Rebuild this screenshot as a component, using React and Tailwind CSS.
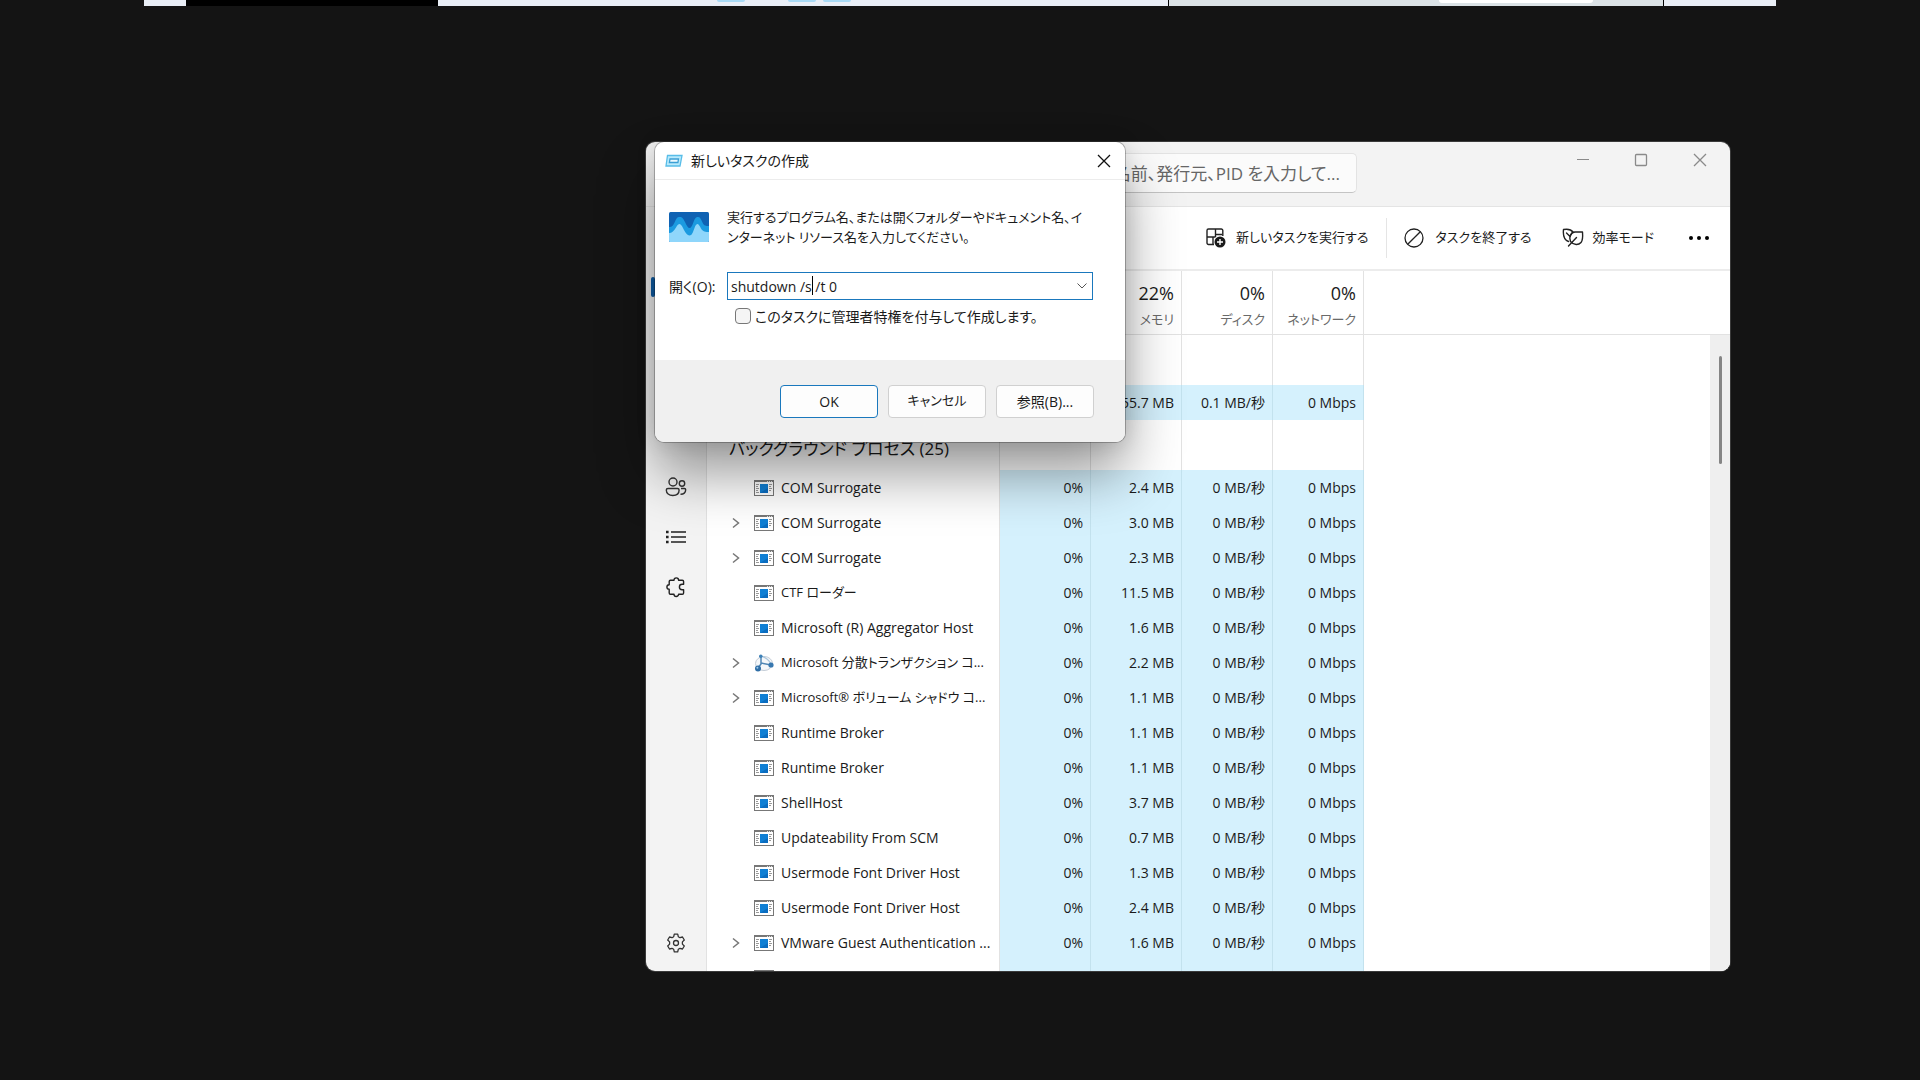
import { useState } from "react";

const processes = [
    { name: "COM Surrogate", memory: "2.4 MB" },
    { name: "COM Surrogate", memory: "3.0 MB", expandable: true },
    { name: "COM Surrogate", memory: "2.3 MB", expandable: true },
    { name: "CTF ローダー", memory: "11.5 MB", small: true },
    { name: "Microsoft (R) Aggregator Host", memory: "1.6 MB" },
    { name: "Microsoft 分散トランザクション コ...", memory: "2.2 MB", expandable: true, icon: "dtc", small: true },
    { name: "Microsoft® ボリューム シャドウ コ...", memory: "1.1 MB", expandable: true, small: true },
    { name: "Runtime Broker", memory: "1.1 MB" },
    { name: "Runtime Broker", memory: "1.1 MB" },
    { name: "ShellHost", memory: "3.7 MB" },
    { name: "Updateability From SCM", memory: "0.7 MB" },
    { name: "Usermode Font Driver Host", memory: "1.3 MB" },
    { name: "Usermode Font Driver Host", memory: "2.4 MB" },
    { name: "VMware Guest Authentication ...", memory: "1.6 MB", expandable: true },
];

function AppIcon() {
    return (
        <svg width="20" height="16" viewBox="0 0 20 16" className="shrink-0">
            <rect x="0.5" y="0.5" width="19" height="15" fill="#fff" stroke="#777" />
            <path d="M0 1h20" stroke="#777" strokeWidth="2" />
            <path d="M13 1.5h1M15 1.5h1M17 1.5h1" stroke="#ddd" />
            <path d="M2 4.5h3M2 6.5h2M2 8.5h3M2 10.5h2M2 12.5h3M15 4.5h3M15 6.5h2M15 8.5h3M15 10.5h2" stroke="#999" />
            <rect x="6" y="4" width="8" height="9" fill="#0f7fd4" />
            <path d="M6 13l8-5v5z" fill="#0a6cc0" />
        </svg>
    );
}

function DtcIcon() {
    return (
        <svg width="20" height="18" viewBox="0 0 20 18" className="shrink-0">
            <ellipse cx="10" cy="9.5" rx="8.5" ry="7" fill="#f4f7fa" stroke="#c3ccd6" />
            <path d="M7 3v7l-3 4M7 9l10 2" fill="none" stroke="#4f86b5" strokeWidth="1.5" />
            <path d="M7 2c4 1 8 4 10 8" fill="none" stroke="#a9c4da" strokeWidth="1.2" />
            <circle cx="6.8" cy="2.2" r="1.8" fill="#3f82b8" />
            <circle cx="17" cy="11" r="2.6" fill="#3878b0" />
            <circle cx="4" cy="14.5" r="3" fill="#2f6ea6" />
            <circle cx="3.4" cy="13.7" r="1" fill="#9cc8e8" />
        </svg>
    );
}

function UsersIcon() {
    return (
        <svg width="22" height="20" viewBox="0 0 22 20" fill="none" stroke="#333" strokeWidth="1.4">
            <circle cx="8" cy="5" r="4" />
            <circle cx="17" cy="6.5" r="2.7" />
            <path d="M3 11.5h9.5c1 0 1.6.6 1.6 1.5 0 3.500-2.500 5.500-6.300 5.500S1.300 16.500 1.300 13c0-.9.7-1.500 1.700-1.500z" />
            <path d="M16 11.5h3.400c.8 0 1.300.5 1.300 1.300 0 2.900-2 4.500-5.200 4.400" />
        </svg>
    );
}

function ListIcon() {
    return (
        <svg width="22" height="14" viewBox="0 0 22 14">
            <path d="M6 2h15M6 7h15M6 12h15" stroke="#222" strokeWidth="1.5" />
            <path d="M1 2h2.600M1 7h2.600M1 12h2.600" stroke="#222" strokeWidth="2.4" />
        </svg>
    );
}

function PuzzleIcon() {
    return (
        <svg width="22" height="22" viewBox="0 0 22 22" fill="none" stroke="#222" strokeWidth="1.4" strokeLinejoin="round">
            <path d="M5.500 4.200H9a2.300 2.300 0 0 1 4.600 0h3.700c.8 0 1.300.5 1.300 1.200v2.900h-1.500a2.700 2.700 0 0 0 0 5.400h1.500v3.200c0 .8-.5 1.300-1.300 1.300h-3.700a2.300 2.300 0 0 1-4.600 0H5.500c-.8 0-1.300-.5-1.300-1.300v-3.600a2.300 2.300 0 0 1 0-4.600V5.400c0-.7.500-1.200 1.300-1.200z" />
        </svg>
    );
}

function GearIcon() {
    return (
        <svg width="20" height="20" viewBox="0 0 20 20" fill="none" stroke="#333" strokeWidth="1.3" strokeLinejoin="round">
            <circle cx="10" cy="10" r="2.5" />
            <path d="M8.300 1.200h3.400l.6 2.500 1.700 1 2.500-.7 1.800 3-1.900 1.900v2.200l1.900 1.900-1.800 3-2.500-.7-1.700 1-.6 2.500H8.300l-.6-2.500-1.700-1-2.500.7-1.800-3 1.900-1.900V8.900L1.700 7l1.800-3 2.500.7 1.700-1z" />
        </svg>
    );
}

function NewTaskIcon() {
    return (
        <svg width="20" height="20" viewBox="0 0 20 20" fill="none" stroke="#222" strokeWidth="1.4">
            <path d="M8 16.500H2.500a1.500 1.500 0 0 1-1.500-1.500V2.500A1.500 1.500 0 0 1 2.500 1h12.800a1.500 1.500 0 0 1 1.500 1.500V8M1 9h8.500M9.500 1v8M9.500 6.500H16M7 9v7.500" />
            <circle cx="14" cy="14" r="5.5" fill="#1a1a1a" stroke="none" />
            <path d="M14 11v6M11 14h6" stroke="#fff" />
        </svg>
    );
}

function LeafIcon() {
    return (
        <svg width="22" height="20" viewBox="0 0 22 20" fill="none" stroke="#222" strokeWidth="1.4" strokeLinejoin="round" strokeLinecap="round">
            <path d="M6.500 13.500C2.500 12 .8 8 1.500 1.500c4-.7 7.500-.3 9.500 2.500" />
            <path d="M8.500 13.500C6.500 9 9 4 13 4h7.500c.4 5 .3 8.500-1.500 10.500-2.500 2.800-7 3-10.500-1z" />
            <path d="M4.500 5l3.500 3.500M14.500 9.500L6.500 18M8 8.500L10 5" />
        </svg>
    );
}

function WaveIcon() {
    return (
        <svg width="40" height="30" viewBox="0 0 40 30">
            <rect width="40" height="30" rx="1.5" fill="#0f62b3" />
            <path d="M0 15c3 0 4-1 6-5.500S9 5 11 5s3 1 5 5 3 6 4.500 6 2.500-2 4-6 2.500-5 4.500-5 3 2 4.500 5.500S37 14 40 14v15H0z" fill="#1b9ae0" />
            <path d="M0 21c3 0 5-2 7-5.500C8.500 12.500 9.500 12 10.500 12s2 1 3.500 4 4 7.500 6.500 7.500 3.500-3.500 5-7.500c1-3 2-4 3-4s2 1.500 3.500 4.500S37 20 40 20v8.500q0 1.500-1.500 1.500h-37Q0 30 0 28.500z" fill="#8fd6fb" />
        </svg>
    );
}

function RunIcon() {
    return (
        <svg width="18" height="14" viewBox="0 0 18 14">
            <path d="M2.500 1.500h14.500l-2 10.500H1z" fill="#b8eafc" stroke="#58bde8" strokeWidth="1.3" />
            <path d="M5 5h8.500l-.6 3.500H4.400z" fill="#eefaff" stroke="#3b9fd4" strokeWidth="1.3" />
        </svg>
    );
}

function ExpandButton() {
    return (
        <button aria-label="展開" className="flex w-[8px] justify-center">
            <svg width="8" height="12" viewBox="0 0 8 12" fill="none" stroke="#777" strokeWidth="1.5">
                <path d="M1 1.500l5.500 4.500L1 10.500" />
            </svg>
        </button>
    );
}

function GroupRow({ title }) {
    return (
        <tr className="h-[50px]">
            <td className="border-r border-[#e2e2e2] pt-[8px] pl-[22px] text-left text-[17px]">{title}</td>
            <td className="border-r border-[#e2e2e2]"></td>
            <td className="border-r border-[#e2e2e2]"></td>
            <td className="border-r border-[#e2e2e2]"></td>
            <td className="border-r border-[#e2e2e2]"></td>
            <td></td>
        </tr>
    );
}

function ProcessRow({ process }) {
    const { name, cpu = "0%", memory, disk = "0 MB/秒", network = "0 Mbps", expandable, icon = "app", small } = process;
    return (
        <tr className="h-[35px] text-right">
            <td className="border-r border-[#e2e2e2]">
                <div className="flex items-center pl-[25px] text-left">
                    <div className="w-[22px] shrink-0">{expandable && <ExpandButton />}</div>
                    {icon === "app" && <AppIcon />}
                    {icon === "dtc" && <DtcIcon />}
                    <span className={small ? "pl-[7px] text-[13px]" : "pl-[7px]"}>{name}</span>
                </div>
            </td>
            <td className="border-r border-[#c3e2ee] bg-[#d5f1fd] pr-[7px]">{cpu}</td>
            <td className="border-r border-[#c3e2ee] bg-[#d5f1fd] pr-[7px]">{memory}</td>
            <td className="border-r border-[#c3e2ee] bg-[#d5f1fd] pr-[7px]">{disk}</td>
            <td className="border-r border-[#c3e2ee] bg-[#d5f1fd] pr-[7px]">{network}</td>
            <td></td>
        </tr>
    );
}

function ColumnHead({ value, label }) {
    return (
        <th scope="col" className="border-r border-b border-[#e2e2e2] pt-[6px] pr-[7px] text-right font-normal">
            <div className="text-[18px] leading-[26px]">{value}</div>
            <div className="text-[13px] leading-[26px] text-[#6a6a6a]">{label}</div>
        </th>
    );
}

function TaskManager() {
    return (
        <main className="absolute top-[142px] right-[190px] bottom-[109px] left-[646px] flex flex-col overflow-hidden rounded-[9px] bg-[#f3f3f3] shadow-[0_0_0_1px_#3a3a3a]">
            <header className="flex h-[65px] shrink-0 items-start justify-between border-b border-[#e4e4e4] pl-[330px]">
                <input
                    type="text"
                    aria-label="検索"
                    placeholder="名前、発行元、PID を入力して..."
                    className="mt-[11px] h-[40px] w-[381px] rounded-[5px] border border-[#e3e3e3] border-b-[#c4c4c4] bg-[#fbfbfb] pr-[16px] text-right text-[17px] placeholder:text-[#666]"
                />
                <div className="flex pt-[10px] text-[#8a8a8a]">
                    <button aria-label="最小化" className="flex h-[16px] w-[58px] items-center justify-center">
                        <svg width="14" height="14" stroke="currentColor"><path d="M1 6.500h12" /></svg>
                    </button>
                    <button aria-label="最大化" className="flex h-[16px] w-[58px] items-center justify-center">
                        <svg width="14" height="14" fill="none" stroke="currentColor" strokeWidth="1.3"><rect x="1.5" y="1.5" width="11" height="11" rx="1" /></svg>
                    </button>
                    <button aria-label="閉じる" className="flex h-[16px] w-[60px] items-center justify-center">
                        <svg width="14" height="14" stroke="currentColor" strokeWidth="1.3"><path d="M1 1l12 12M13 1L1 13" /></svg>
                    </button>
                </div>
            </header>

            <div className="flex min-h-0 flex-1">
                <nav className="flex w-[60px] shrink-0 flex-col items-center pt-[52px]">
                    <button aria-label="プロセス" className="flex h-[56px] w-full items-center pl-[5px]">
                        <span className="h-[20px] w-[4px] rounded-full bg-[#0f5fa8]"></span>
                    </button>
                    <button aria-label="ユーザー" className="mt-[145px] flex h-[50px] w-full items-center justify-center pt-1"><UsersIcon /></button>
                    <button aria-label="詳細" className="flex h-[50px] w-full items-center justify-center pt-1"><ListIcon /></button>
                    <button aria-label="サービス" className="flex h-[50px] w-full items-center justify-center pt-1"><PuzzleIcon /></button>
                    <button aria-label="設定" className="mt-auto flex h-[57px] w-full items-center justify-center"><GearIcon /></button>
                </nav>

                <section className="flex min-w-0 flex-1 flex-col border-l border-[#e2e2e2] bg-white">
                    <div className="flex h-[64px] shrink-0 items-center justify-end border-b-2 border-[#ececec] pr-[21px] text-[13px] text-[#1b1b1b]">
                        <button className="flex items-center gap-[10px] pr-[18px]"><NewTaskIcon />新しいタスクを実行する</button>
                        <div className="h-[40px] border-l border-[#e5e5e5] pr-[17px]"></div>
                        <button className="flex items-center gap-[11px] pr-[30px]">
                            <svg width="20" height="20" fill="none" stroke="#222" strokeWidth="1.3"><circle cx="10" cy="10" r="9" /><path d="M16.300 3.700L3.700 16.300" /></svg>
                            タスクを終了する
                        </button>
                        <button className="flex items-center gap-[9px] pr-[35px]"><LeafIcon />効率モード</button>
                        <button aria-label="その他">
                            <svg width="20" height="6"><circle cx="2" cy="3" r="2" /><circle cx="10" cy="3" r="2" /><circle cx="18" cy="3" r="2" /></svg>
                        </button>
                    </div>

                    <div className="relative min-h-0 flex-1 overflow-hidden">
                        <table className="w-full table-fixed border-separate border-spacing-0 text-[14px] whitespace-nowrap">
                            <colgroup>
                                <col className="w-[293px]" />
                                <col className="w-[91px]" />
                                <col className="w-[91px]" />
                                <col className="w-[91px]" />
                                <col className="w-[91px]" />
                                <col />
                            </colgroup>
                            <thead>
                                <tr className="h-[64px]">
                                    <th className="border-r border-b border-[#e2e2e2]"></th>
                                    <th className="border-r border-b border-[#e2e2e2]"></th>
                                    <ColumnHead value="22%" label="メモリ" />
                                    <ColumnHead value="0%" label="ディスク" />
                                    <ColumnHead value="0%" label="ネットワーク" />
                                    <th className="border-b border-[#e2e2e2]"></th>
                                </tr>
                            </thead>
                            <tbody>
                                <GroupRow title="" />
                                <ProcessRow process={{ name: "", icon: "none", cpu: "", memory: "55.7 MB", disk: "0.1 MB/秒" }} />
                                <GroupRow title="バックグラウンド プロセス (25)" />
                                {processes.map((process, index) => (
                                    <ProcessRow key={index} process={process} />
                                ))}
                                <ProcessRow process={{ name: "", cpu: "", memory: "", disk: "", network: "" }} />
                            </tbody>
                        </table>
                        <div className="absolute top-[64px] right-0 bottom-0 flex w-[20px] justify-center bg-[#efefef] pt-[21px]">
                            <div className="h-[108px] w-[3px] rounded-full bg-[#858585]"></div>
                        </div>
                    </div>
                </section>
            </div>
        </main>
    );
}

function RunDialog() {
    const [command, setCommand] = useState("shutdown /s /t 0");
    const [elevated, setElevated] = useState(false);

    return (
        <form
            role="dialog"
            aria-labelledby="dialog-title"
            onSubmit={(e) => e.preventDefault()}
            className="absolute top-[142px] left-[655px] w-[470px] overflow-hidden rounded-[9px] bg-white text-[14px] text-[#1a1a1a] shadow-[0_0_0_1px_rgba(0,0,0,0.25),0_0_20px_rgba(0,0,0,0.12),0_32px_56px_rgba(0,0,0,0.4)]"
        >
            <div className="flex h-[38px] items-center border-b border-[#ececec] pr-[14px] pl-[10px]">
                <RunIcon />
                <h1 id="dialog-title" className="flex-1 pl-[8px]">新しいタスクの作成</h1>
                <button type="button" aria-label="閉じる">
                    <svg width="14" height="14" stroke="#111" strokeWidth="1.3"><path d="M1 1l12 12M13 1L1 13" /></svg>
                </button>
            </div>

            <div className="h-[180px] px-[14px] pt-[27px]">
                <div className="flex items-center gap-[18px] whitespace-nowrap">
                    <WaveIcon />
                    <p className="text-[13px] leading-[20px]">
                        実行するプログラム名、または開くフォルダーやドキュメント名、イ<br />
                        ンターネット リソース名を入力してください。
                    </p>
                </div>
                <div className="mt-[25px] flex h-[28px] items-center">
                    <label htmlFor="command" className="w-[58px] whitespace-nowrap">開く(O):</label>
                    <div className="relative flex h-[28px] w-[366px] items-center border border-[#1a78bd] bg-white">
                        <input
                            id="command"
                            type="text"
                            value={command}
                            onChange={(e) => setCommand(e.target.value)}
                            className="min-w-0 flex-1 pl-[3px] text-[14px] outline-none"
                        />
                        <span className="absolute top-[3px] left-[84px] h-[19px] w-px bg-black"></span>
                        <button type="button" aria-label="履歴" className="px-[5px]">
                            <svg width="10" height="6" fill="none" stroke="#555"><path d="M0.500 0.500l4.500 4.500 4.500-4.500" /></svg>
                        </button>
                    </div>
                </div>
                <label className="mt-[7px] flex h-[18px] items-center gap-[4px] pl-[66px]">
                    <input
                        type="checkbox"
                        checked={elevated}
                        onChange={(e) => setElevated(e.target.checked)}
                        className="h-[16px] w-[16px] appearance-none rounded-[4px] border border-[#777] bg-[#f5f5f5] checked:bg-[#1a78bd]"
                    />
                    このタスクに管理者特権を付与して作成します。
                </label>
            </div>

            <div className="flex h-[82px] items-center justify-end gap-[10px] bg-[#f0f0f0] pr-[31px]">
                <button type="submit" className="h-[33px] w-[98px] rounded-[4px] border border-[#1a78bd] bg-[#fdfdfd]">OK</button>
                <button type="button" className="h-[33px] w-[98px] rounded-[4px] border border-[#d0d0d0] bg-[#fdfdfd] text-[13px]">キャンセル</button>
                <button type="button" className="h-[33px] w-[98px] rounded-[4px] border border-[#d0d0d0] bg-[#fdfdfd]">参照(B)...</button>
            </div>
        </form>
    );
}

export default function App() {
    return (
        <div className="relative min-h-screen overflow-hidden bg-[#141414] font-['Open_Sans','Noto_Sans_CJK_JP',sans-serif] text-[#1a1a1a] [font-feature-settings:'palt']">
            {/* bottom edge of the desktop behind */}
            <div className="mx-[144px] flex h-[6px] bg-[#e9eef6]">
                <div className="ml-[42px] w-[252px] bg-black"></div>
                <div className="flex flex-1 pl-[279px]">
                    <div className="h-[2px] w-[28px] rounded-b-full bg-[#a9daf5]"></div>
                    <div className="ml-[43px] h-[2px] w-[28px] rounded-b-full bg-[#a9daf5]"></div>
                    <div className="ml-[7px] h-[2px] w-[28px] rounded-b-full bg-[#a9daf5]"></div>
                </div>
                <div className="flex w-[496px] justify-end border-x border-black bg-[#dbe2e6] pr-[70px]">
                    <div className="h-[3px] w-[154px] rounded-b-[3px] bg-white"></div>
                </div>
                <div className="w-[112px]"></div>
            </div>

            <TaskManager />
            <RunDialog />
        </div>
    );
}
